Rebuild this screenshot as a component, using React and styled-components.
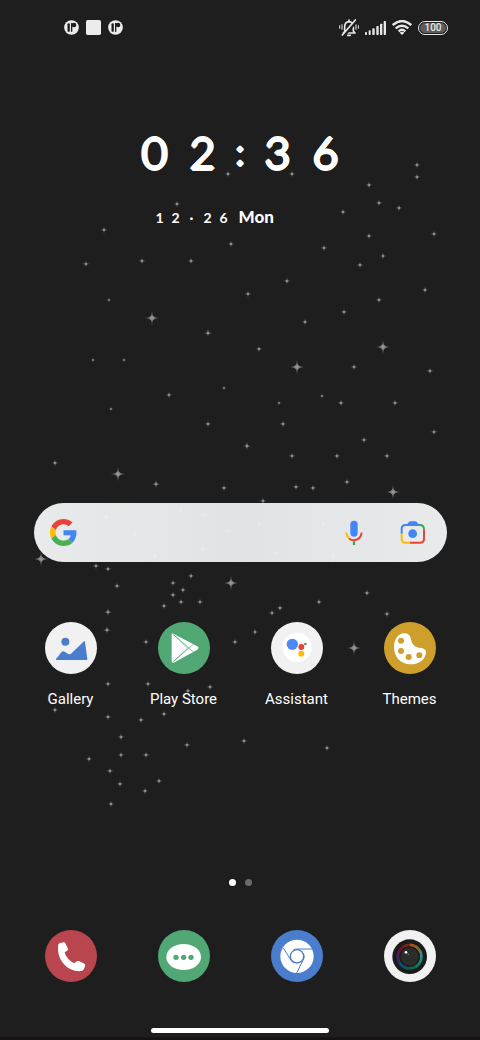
import { useState } from 'react';
import styled, { createGlobalStyle } from 'styled-components';

// [x, y, radius] of every star on the wallpaper
const stars = [
    [228, 174, 4], [177, 204, 4], [104, 230, 4], [231, 244, 4], [142, 261, 4], [191, 261, 4], [86, 264, 4], [248, 294, 4],
    [109, 300, 3], [152, 318, 8], [208, 333, 5], [93, 360, 3], [124, 360, 3], [224, 388, 3], [169, 395, 4], [111, 409, 3],
    [208, 424, 4], [247, 446, 5], [55, 463, 4], [118, 474, 8], [156, 484, 5], [224, 488, 4],
    [292, 174, 4], [417, 165, 4], [417, 177, 4], [369, 185, 4], [379, 203, 4], [399, 208, 4], [343, 212, 4], [434, 234, 4],
    [369, 236, 4], [324, 248, 4], [383, 256, 4], [360, 265, 4], [287, 281, 4], [425, 290, 4], [379, 300, 4], [344, 312, 4],
    [305, 322, 4], [383, 347, 8], [297, 367, 8], [259, 349, 4], [354, 367, 4], [430, 371, 4], [322, 396, 3], [279, 403, 3],
    [341, 403, 4], [395, 403, 4], [283, 424, 4], [434, 432, 4], [364, 440, 4], [292, 456, 4], [337, 456, 4], [387, 456, 4],
    [347, 482, 4], [296, 487, 4], [313, 488, 4], [393, 492, 8], [263, 501, 4],
    [181, 510, 4], [204, 515, 4], [229, 531, 4], [203, 549, 4], [155, 556, 4], [135, 534, 4], [106, 517, 4], [259, 524, 4],
    [323, 524, 4], [276, 553, 4], [333, 556, 8],
    [41, 559, 8], [96, 566, 4], [108, 569, 4], [117, 586, 4], [108, 612, 5], [107, 630, 5], [191, 576, 4], [173, 583, 4],
    [183, 590, 4], [173, 595, 4], [181, 602, 4], [200, 602, 4], [164, 606, 4], [231, 583, 8], [367, 593, 4], [319, 602, 4],
    [280, 608, 4], [272, 613, 4], [387, 614, 4], [255, 632, 4], [235, 642, 4], [146, 642, 4], [354, 648, 8], [108, 684, 4],
    [148, 684, 4], [210, 687, 4], [188, 691, 4], [55, 710, 4], [164, 714, 4], [108, 717, 4], [141, 720, 4], [121, 737, 4],
    [187, 745, 4], [244, 741, 4], [327, 748, 4], [121, 755, 4], [146, 755, 4], [89, 759, 4], [110, 771, 4], [159, 781, 4],
    [120, 784, 4], [145, 791, 4], [111, 804, 4],
];

const lensColors = ['#a3561c', '#8a6a2a', '#3f8f7c', '#14907f', '#0d7a6a', '#0c6a4a', '#0b5c58', '#0d4f78', '#27306b', '#521c4c', '#6f1228', '#7c2418'];

function Stars() {
    return (
        <Wallpaper viewBox="0 0 480 1040" preserveAspectRatio="xMidYMin slice" aria-hidden="true">
            <defs>
                <radialGradient id="glow">
                    <stop offset="0" stopColor="#a0a0a0" />
                    <stop offset="0.4" stopColor="#868686" stopOpacity="0.8" />
                    <stop offset="1" stopColor="#868686" stopOpacity="0.3" />
                </radialGradient>
                <path id="star" fill="url(#glow)" d="M0-10Q.5-2 2.200-2.200Q2-.5 10 0Q2 .5 2.200 2.200Q.5 2 0 10Q-.5 2-2.200 2.200Q-2 .5-10 0Q-2-.5-2.200-2.200Q-.5-2 0-10Z" />
            </defs>
            {stars.map(([x, y, r]) => (
                <use key={`${x}-${y}`} href="#star" transform={`translate(${x} ${y}) scale(${r / 10})`} />
            ))}
        </Wallpaper>
    )
}

function StatusIcons() {
    return (
        <Status_side>
            {[0, 1, 2].map((i) => i === 1 ? (
                <svg key={i} width="15" height="15" viewBox="0 0 45 45"><rect width="45" height="45" rx="5" fill="#ececec" /></svg>
            ) : (
                <svg key={i} width="15" height="15" viewBox="0 0 45 45">
                    <circle cx="22.500" cy="22.500" r="22" fill="#ececec" />
                    <path d="M14 13v19" stroke="#1e1e1e" strokeWidth="7" strokeLinecap="round" />
                    <path d="M23 10v24" stroke="#1e1e1e" strokeWidth="4" strokeLinecap="round" />
                    <circle cx="30" cy="15" r="7" fill="#1e1e1e" />
                </svg>
            ))}
        </Status_side>
    )
}

function SystemIcons() {
    return (
        <Status_side $tight>
            <svg width="20" height="18" viewBox="0 0 60 54" fill="none" stroke="#e8e8e8" strokeWidth="5" strokeLinecap="round">
                <path d="M17 38V22Q18 9 30 8Q42 9 43 22V36L48 42H13ZM30 3V8" strokeLinejoin="round" />
                <path d="M26 49H34" />
                <path d="M9 17V31M2 20V28M51 17V31M58 20V28" strokeWidth="3" />
                <path d="M15 50L52 7" stroke="#1e1e1e" strokeWidth="8" />
                <path d="M10 48L49 3" />
            </svg>
            <svg width="21" height="14" viewBox="0 0 63 42" fill="#e8e8e8">
                <rect x="0" y="33" width="6" height="9" rx="2" />
                <rect x="11" y="28" width="6" height="14" rx="2" />
                <rect x="22" y="22" width="7" height="20" rx="2" />
                <rect x="34" y="15" width="7" height="27" rx="2" />
                <rect x="45" y="8" width="7" height="34" rx="2" />
                <rect x="56" y="0" width="7" height="42" rx="2" />
            </svg>
            <svg width="20" height="15" viewBox="0 0 60 45" fill="none" stroke="#e8e8e8" strokeWidth="7">
                <path d="M2 15Q30-9 58 15M11 25Q30 9 49 25M20 34Q30 25 40 34" />
                <path d="M30 45L23 38Q30 32 37 38Z" fill="#e8e8e8" stroke="none" />
            </svg>
            <Battery><span>100</span></Battery>
        </Status_side>
    )
}

const GoogleLogo = () => (
    <svg width="27" height="27" viewBox="0 0 48 48">
        <path fill="#EA4335" d="M24 9.500c3.540 0 6.710 1.220 9.210 3.600l6.850-6.850C35.900 2.380 30.470 0 24 0 14.620 0 6.510 5.380 2.560 13.220l7.980 6.190C12.430 13.720 17.740 9.500 24 9.500z" />
        <path fill="#4285F4" d="M46.980 24.550c0-1.570-.15-3.090-.38-4.550H24v9.020h12.940c-.58 2.960-2.260 5.480-4.780 7.180l7.730 6c4.510-4.180 7.090-10.360 7.090-17.650z" />
        <path fill="#FBBC05" d="M10.530 28.590c-.48-1.450-.76-2.990-.76-4.590s.27-3.140.76-4.590l-7.980-6.190C.92 16.460 0 20.120 0 24c0 3.880.92 7.540 2.560 10.780l7.970-6.190z" />
        <path fill="#4CAF50" d="M24 48c6.480 0 11.930-2.130 15.890-5.810l-7.730-6c-2.150 1.450-4.920 2.300-8.160 2.300-6.260 0-11.570-4.220-13.470-9.910l-7.980 6.190C6.510 42.620 14.620 48 24 48z" />
    </svg>
)

const MicIcon = () => (
    <svg width="18" height="26" viewBox="0 0 54 78" fill="none" strokeWidth="6">
        <rect x="16" y="2" width="22" height="48" rx="11" fill="#4285F4" />
        <path d="M4 38Q5 49 12 55" stroke="#FBBC05" />
        <path d="M12 55Q18 61 27 61Q48 59 50 38" stroke="#EA4335" />
        <path d="M27 64V75" stroke="#34A853" strokeWidth="7" />
    </svg>
)

const LensIcon = () => (
    <svg width="26" height="24" viewBox="0 0 78 72" fill="none" strokeWidth="6">
        <path d="M5 38V24Q5 12 17 12H60" stroke="#4285F4" />
        <path d="M20 12L26 4Q28 1 32 1H45Q49 1 51 4L57 12Z" fill="#4285F4" />
        <path d="M57 12H60Q72 12 72 26" stroke="#34A853" />
        <path d="M72 26V53Q72 65 60 65H30" stroke="#EA4335" />
        <path d="M30 65H17Q5 65 5 53V38" stroke="#FBBC05" />
        <circle cx="38" cy="38" r="13" fill="#4285F4" />
    </svg>
)

const icons = {
    gallery: (
        <>
            <circle cx="61" cy="59" r="12" fill="#4a7dcb" />
            <path fill="#4a7dcb" d="M33 111L49 91Q53 86 59 89L70 96Q74 98 78 95L117 58Q119 56 120 60L127 111Q127 114 124 114H35Q32 114 33 111Z" />
        </>
    ),
    play: (
        <>
            <path fill="#fff" d="M41 37Q41 32 46 35L118 73Q125 78 118 83L47 122Q41 124 41 118Z" />
            <path fill="none" stroke="#51a874" strokeWidth="2" d="M43 35L107 90M43 121L107 66" />
            <path fill="none" stroke="#51a874" strokeWidth="2" d="M48 118L89 78L48 39" />
        </>
    ),
    assistant: (
        <>
            <circle cx="78" cy="76" r="44" fill="#fff" />
            <circle cx="64" cy="67" r="17" fill="#4c8bf5" />
            <circle cx="91" cy="75" r="9" fill="#ea4335" />
            <circle cx="103" cy="66" r="4" fill="#34a853" />
            <circle cx="91" cy="95" r="9" fill="#fbbc05" />
        </>
    ),
    themes: (
        <>
            <path fill="#fff" d="M60 34Q76 33 80 48Q84 74 104 77Q126 77 126 92C124 114 102 128 79 127C49 126 30 104 30 75C30 51 43 35 60 34Z" />
            {[[51, 56], [51, 87], [74, 105], [106, 100]].map(([x, y]) => <circle key={y} cx={x} cy={y} r="9" fill="#cf9f2c" />)}
        </>
    ),
    phone: (
        <path fill="#fff" d="M43 40L55 37Q59 36 61 40L69 56Q70 60 66 62L59 67Q60 76 70 87Q80 97 88 100L95 94Q98 92 102 93L118 101Q122 103 120 108L117 117Q113 124 103 124C66 123 40 92 39 58Q38 44 43 40Z" />
    ),
    messages: (
        <>
            <ellipse cx="77" cy="81" rx="52" ry="39" fill="#fff" />
            {[54, 77, 99].map((x) => <circle key={x} cx={x} cy="82" r="8" fill="#51a874" />)}
        </>
    ),
    browser: (
        <>
            <circle cx="78" cy="79" r="50" fill="#fff" />
            <g fill="none" stroke="#4a7dcb" strokeWidth="3">
                <circle cx="78" cy="79" r="20" strokeWidth="4" />
                <path d="M66 61Q71 57 78 57H123M37 54L57 86Q61 95 68 99M99 75Q101 84 96 91L77 129" />
            </g>
        </>
    ),
    camera: (
        <>
            <circle cx="77" cy="80" r="52" fill="#1b1b1b" />
            {lensColors.map((color, i) => (
                <circle key={color} cx="77" cy="80" r="35" fill="none" stroke={color} strokeWidth="9" pathLength="12"
                    strokeDasharray="1.050 10.950" transform={`rotate(${i * 30 - 90} 77 80)`} />
            ))}
            <circle cx="77" cy="80" r="29" fill="#2c2c2c" stroke="#1b1b1b" strokeWidth="4" />
            <circle cx="66" cy="67" r="4" fill="#fff" />
            <circle cx="73" cy="73" r="2" fill="#8a8a8a" />
        </>
    ),
}

const apps = [
    { id: 'gallery', name: 'Gallery', color: '#f1f1f1' },
    { id: 'play', name: 'Play Store', color: '#51a874' },
    { id: 'assistant', name: 'Assistant', color: '#f1f1f1' },
    { id: 'themes', name: 'Themes', color: '#cf9f2c' },
];

const dock = [
    { id: 'phone', name: 'Phone', color: '#b9464f' },
    { id: 'messages', name: 'Messages', color: '#51a874' },
    { id: 'browser', name: 'Browser', color: '#4a7dcb' },
    { id: 'camera', name: 'Camera', color: '#f1f1f1' },
];

function App_icon({ app, showName }) {
    return (
        <App_button type="button" aria-label={app.name}>
            <Icon_circle $color={app.color} viewBox="0 0 156 156">{icons[app.id]}</Icon_circle>
            {showName && <App_name>{app.name}</App_name>}
        </App_button>
    )
}

function App() {
    const [page, setPage] = useState(0);
    const [query, setQuery] = useState('');
    return (
        <Screen>
            <GlobalStyle />
            <Stars />
            <Status_bar>
                <StatusIcons />
                <SystemIcons />
            </Status_bar>
            <Clock>
                <Time>
                    <Digit>0</Digit>
                    <Digit>2</Digit>
                    <Colon>:</Colon>
                    <Digit>3</Digit>
                    <Digit>6</Digit>
                </Time>
                <Date_row>
                    {['1', '2', '·', '2', '6'].map((c, i) => <Date_digit key={i}>{c}</Date_digit>)}
                    <Day>Mon</Day>
                </Date_row>
            </Clock>
            <Search_bar onSubmit={(e) => e.preventDefault()}>
                <GoogleLogo />
                <Search_input aria-label="Search" value={query} onChange={(e) => setQuery(e.target.value)} />
                <Search_button type="button" aria-label="Voice search"><MicIcon /></Search_button>
                <Search_button type="button" aria-label="Lens"><LensIcon /></Search_button>
            </Search_bar>
            <App_grid>
                {apps.map((app) => <App_icon key={app.id} app={app} showName />)}
            </App_grid>
            <Pages>
                {[0, 1].map((i) => (
                    <Page_dot key={i} type="button" aria-label={`Page ${i + 1}`} $active={page === i} onClick={() => setPage(i)} />
                ))}
            </Pages>
            <App_grid as="nav">
                {dock.map((app) => <App_icon key={app.id} app={app} />)}
            </App_grid>
            <Home_bar />
        </Screen>
    )
}

const GlobalStyle = createGlobalStyle`
*{box-sizing:border-box;}
body{
margin:0;
background-color:#1e1e1e;
color:#fff;
font-family:Roboto, sans-serif;
}
svg{display:block;}
button{
border:0;
padding:0;
background:none;
color:inherit;
font:inherit;
cursor:pointer;
}
`
const Screen = styled.main`
position:relative;
isolation:isolate;
min-height:100vh;
display:flex;
flex-direction:column;
border-bottom:3px solid #1a1116;
`
// sits behind everything on the screen
const Wallpaper = styled.svg`
position:absolute;
inset:0;
z-index:-1;
width:100%;
height:100%;
`
const Status_bar = styled.header`
display:flex;
justify-content:space-between;
align-items:center;
height:55px;
padding:0 32px 0 64px;
`
const Status_side = styled.div`
display:flex;
align-items:center;
gap:${props => props.$tight ? '6px' : '7px'};
`
const Battery = styled.div`
display:flex;
width:30px;
height:14px;
padding:1px;
border:1px solid #e8e8e8;
border-radius:7px;
span{
flex:1;
border-radius:5px;
background-color:#5c5c5c;
color:#e8e8e8;
font-size:10px;
font-weight:500;
line-height:10px;
text-align:center;
}
`
const Clock = styled.section`
align-self:center;
margin-top:72px;
font-family:Lato, sans-serif;
`
// the shadows thicken the strokes and round off their ends
const Time = styled.div`
display:flex;
font-size:44px;
font-weight:300;
line-height:50px;
text-align:center;
text-shadow:2px 0 #fff, -2px 0 #fff, 0 2px #fff, 0 -2px #fff, 1px 1px #fff, -1px 1px #fff, 1px -1px #fff, -1px -1px #fff;
`
const Digit = styled.span`
width:48px;
`
const Colon = styled.span`
width:27px;
font-size:36px;
line-height:48px;
`
const Date_row = styled.div`
display:flex;
align-items:baseline;
margin-top:28px;
padding-left:21px;
font-weight:700;
line-height:24px;
`
const Date_digit = styled.span`
width:16px;
font-size:14px;
text-align:center;
`
const Day = styled.span`
margin-left:7px;
font-size:17px;
font-weight:900;
`
const Search_bar = styled.form`
display:flex;
align-items:center;
height:59px;
margin:273px 33px 60px 34px;
padding:0 21px 0 16px;
border-radius:30px;
background:linear-gradient(90deg, rgba(243,245,246,.95), rgba(236,237,238,.95) 50%, rgba(243,245,246,.95));
`
const Search_input = styled.input`
flex:1;
min-width:0;
height:40px;
margin:0 16px;
border:0;
outline:0;
background:none;
font-size:16px;
`
const Search_button = styled.button`
& + &{margin-left:37px;}
`
const App_grid = styled.section`
display:grid;
grid-template-columns:repeat(4, 1fr);
padding:0 14px;
`
const App_button = styled.button`
display:flex;
flex-direction:column;
align-items:center;
gap:15px;
`
const Icon_circle = styled.svg`
width:52px;
height:52px;
border-radius:50%;
background-color:${props => props.$color};
`
const App_name = styled.span`
font-size:15px;
line-height:20px;
`
const Pages = styled.div`
display:flex;
justify-content:center;
gap:9px;
margin:auto 0 44px;
`
const Page_dot = styled.button`
width:7px;
height:7px;
border-radius:50%;
background-color:${props => props.$active ? '#fff' : '#6a6a6a'};
`
const Home_bar = styled.div`
align-self:center;
width:37%;
height:5px;
margin:46px 0 4px;
border-radius:3px;
background-color:#fff;
`
export default App;
